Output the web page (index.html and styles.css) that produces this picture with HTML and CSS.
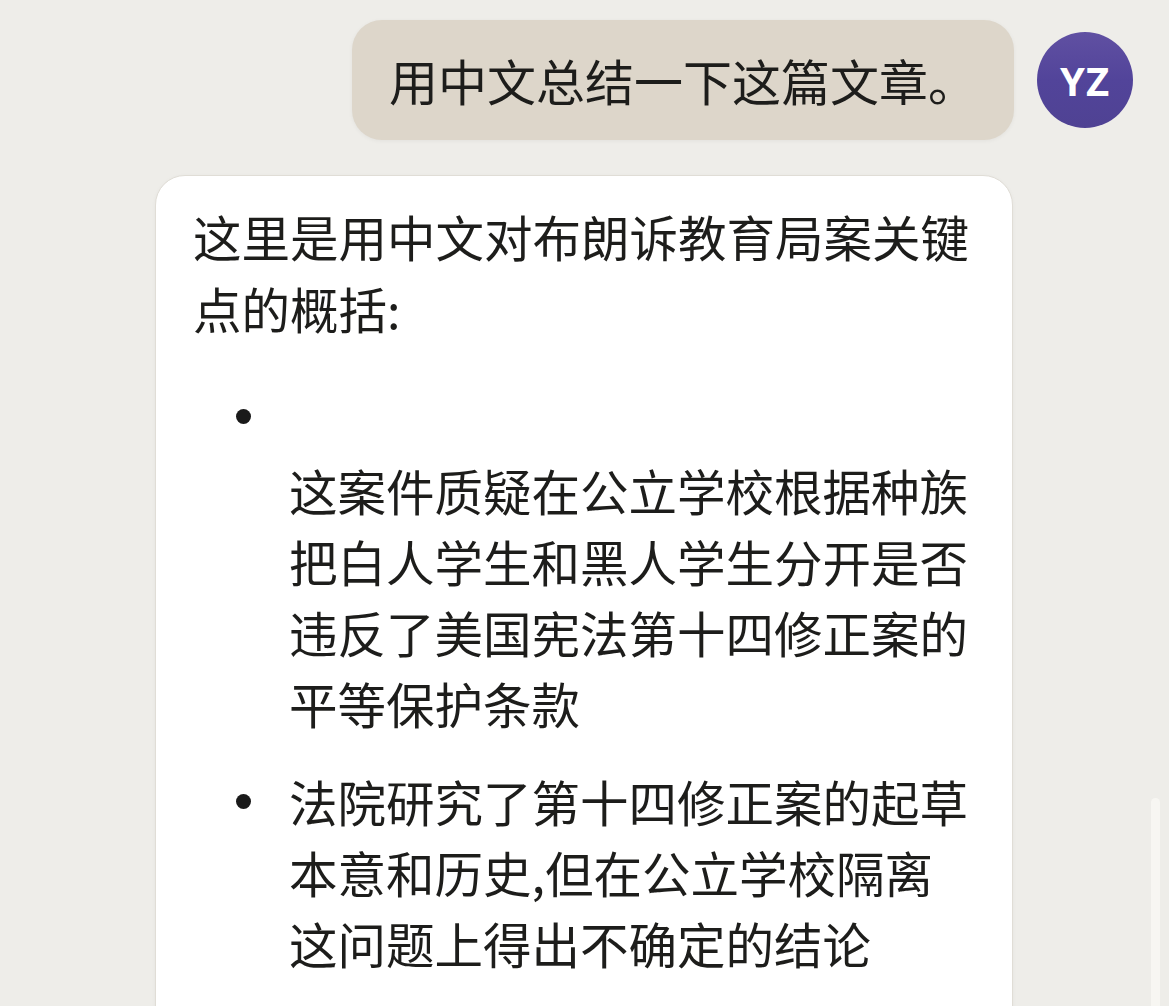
FILE: index.html
```html
<!DOCTYPE html>
<html lang="zh">
<head>
<meta charset="utf-8">
<title>Chat</title>
<link rel="stylesheet" href="styles.css">
</head>
<body>
<div class="chat">
  <div class="user-row">
    <div class="bubble">用中文总结一下这篇文章。</div>
    <div class="avatar">YZ</div>
  </div>
  <div class="card">
    <p class="intro">这里是用中文对布朗诉教育局案关键点的概括:</p>
    <ul class="list">
      <li class="item item-stacked">
        <div class="marker-line"><span class="dot"></span></div>
        <div class="text text-stacked">这案件质疑在公立学校根据种族把白人学生和黑人学生分开是否违反了美国宪法第十四修正案的平等保护条款</div>
      </li>
      <li class="item item-inline">
        <div class="marker"><span class="dot"></span></div>
        <div class="text">法院研究了第十四修正案的起草本意和历史,但在公立学校隔离这问题上得出不确定的结论</div>
      </li>
    </ul>
  </div>
</div>
<div class="scroll-thumb"></div>
</body>
</html>
```
FILE: styles.css
```css
html, body {
  margin: 0;
  padding: 0;
  background: #eeede9;
  overflow: hidden;
}
body {
  font-family: "Noto Sans CJK SC", "Noto Sans", sans-serif;
  color: #1d1d1b;
  height: 1006px;
}
.chat {
  padding-top: 20px;
}
.user-row {
  display: flex;
  justify-content: flex-end;
  align-items: center;
  gap: 23px;
  padding-right: 36px;
}
.bubble {
  background: #ddd6ca;
  border-radius: 30px;
  padding: 24px 37px 24px 37px;
  font-size: 49px;
  line-height: 72px;
  white-space: nowrap;
  box-shadow: 0 1px 4px rgba(0, 0, 0, 0.05);
}
.avatar {
  width: 96px;
  height: 96px;
  border-radius: 50%;
  background: linear-gradient(180deg, #6050a2 0%, #52449a 50%, #4f4293 100%);
  color: #ffffff;
  font-family: "Open Sans", "Roboto", sans-serif;
  font-weight: 700;
  font-size: 40px;
  display: flex;
  align-items: center;
  justify-content: center;
  letter-spacing: 1px;
  flex: none;
}
.card {
  margin: 35px 0 0 155px;
  width: 858px;
  box-sizing: border-box;
  background: #ffffff;
  border: 1px solid #e0ddd6;
  border-radius: 30px;
  padding: 24px 36px 40px 37px;
  min-height: 900px;
  box-shadow: 0 1px 4px rgba(0, 0, 0, 0.04);
}
.intro {
  margin: 0;
  font-size: 48.5px;
  line-height: 72px;
}
.list {
  list-style: none;
  margin: 36px 0 0 0;
  padding: 0;
  font-size: 48.5px;
  line-height: 71px;
}
.item-stacked {
  display: block;
}
.marker-line {
  height: 72px;
  width: 96px;
  display: flex;
  align-items: center;
}
.item-inline {
  display: flex;
  margin-top: 27px;
}
.marker {
  width: 96px;
  flex: none;
  height: 71px;
  display: flex;
  align-items: center;
}
.dot {
  display: block;
  width: 15px;
  height: 15px;
  border-radius: 50%;
  background: #1a1a1a;
  margin-left: 43px;
}
.text {
  flex: 1;
}
.text-stacked {
  margin: 3px 0 0 96px;
}
.scroll-thumb {
  position: fixed;
  left: 1151px;
  top: 798px;
  width: 9px;
  height: 220px;
  border-radius: 5px;
  background: #f7f6f2;
}
```
